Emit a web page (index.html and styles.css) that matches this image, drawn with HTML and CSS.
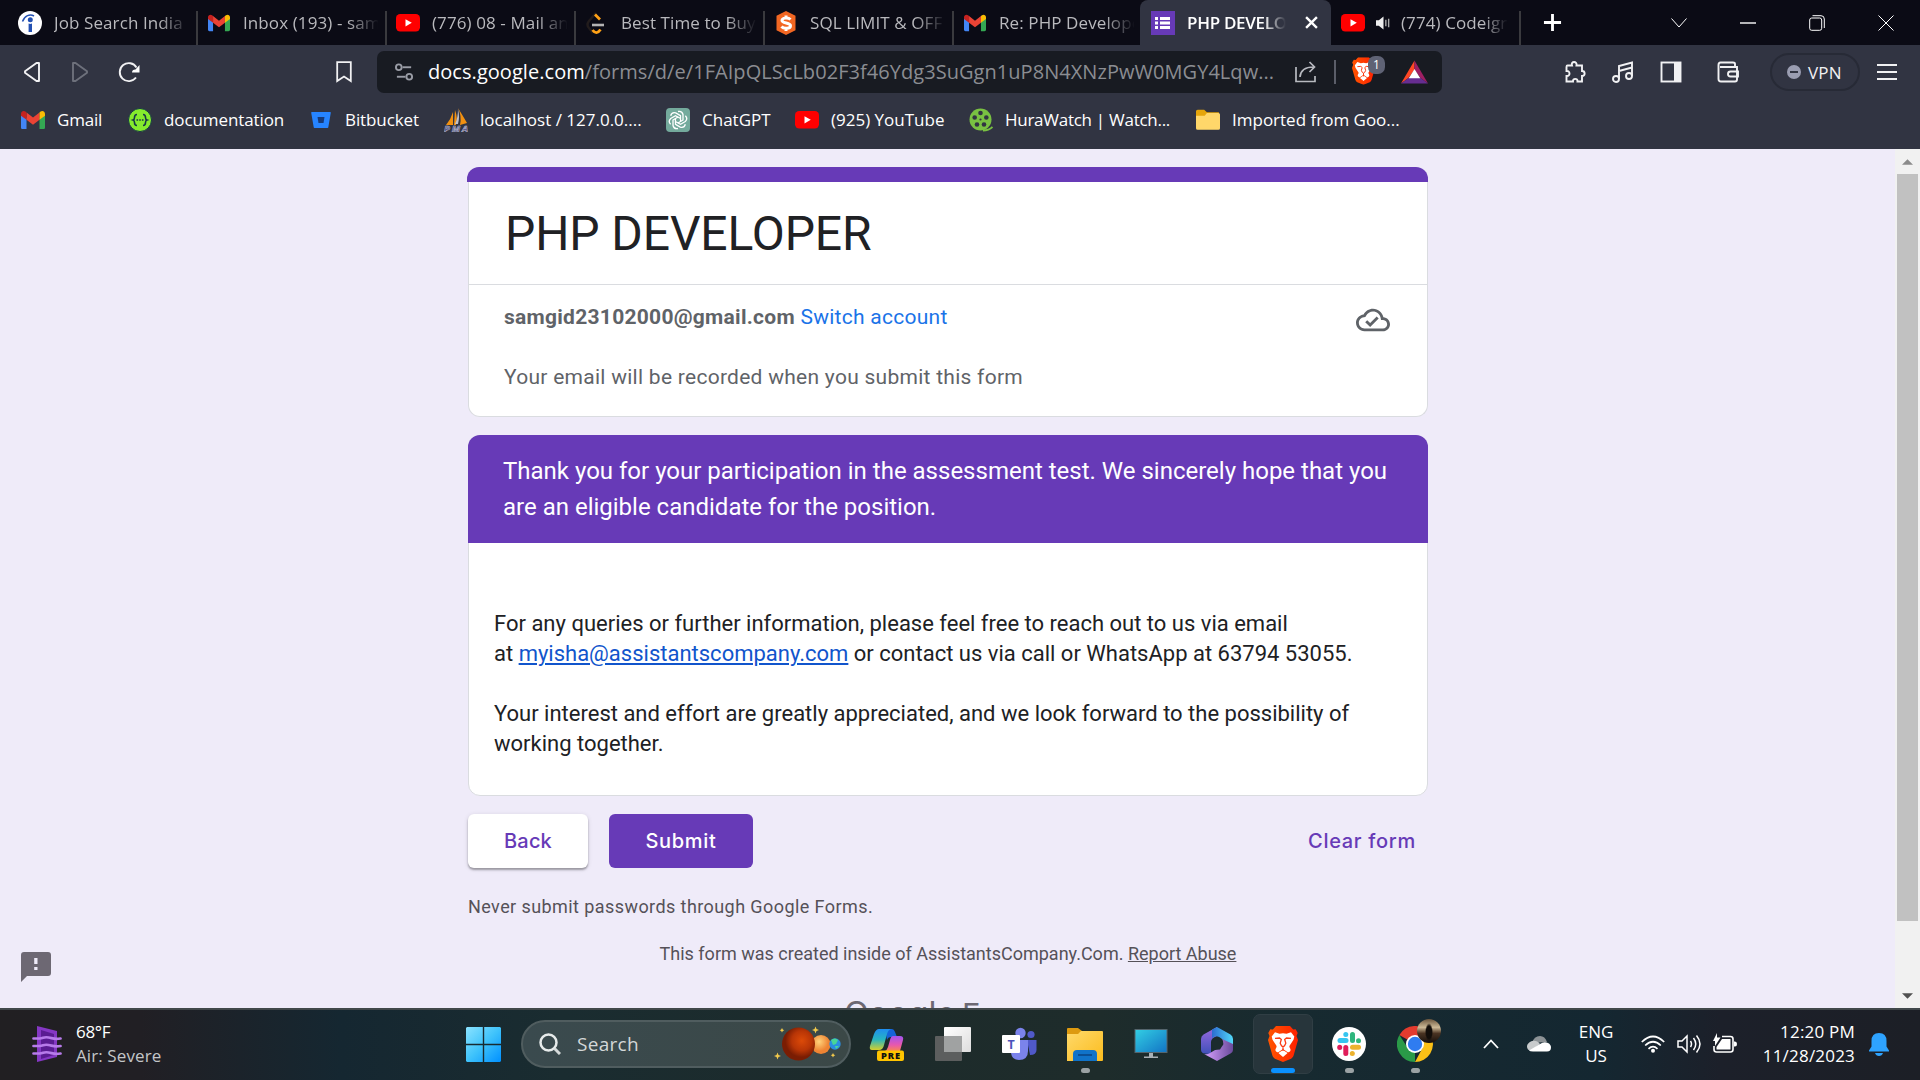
FILE: index.html
```html
<!DOCTYPE html>
<html lang="en">
<head>
<meta charset="utf-8">
<title>PHP DEVELOPER</title>
<link rel="stylesheet" href="styles.css">
</head>
<body>
<svg class="defs" width="0" height="0" aria-hidden="true">
  <defs>
    <symbol id="gmail" viewBox="0 0 24 18">
      <path fill="#4285f4" d="M0 3v13.4C0 17.3.7 18 1.600 18H5.500V7z"/>
      <path fill="#34a853" d="M24 3v13.400c0 .9-.7 1.600-1.600 1.600H18.500V7z"/>
      <path fill="#ea4335" d="M5.500 1.400 12 6.500l6.500-5.100V8.700L12 13.700 5.500 8.700z"/>
      <path fill="#c5221f" d="M0 3v1.700l5.500 4V1.400L4.400.6C2.500-.8 0 .5 0 3z"/>
      <path fill="#fbbc04" d="M24 3v1.700l-5.500 4V1.400l1.100-.8C21.500-.8 24 .5 24 3z"/>
    </symbol>
    <symbol id="youtube" viewBox="0 0 24 18">
      <rect width="24" height="17.500" rx="4.200" fill="#f00"/>
      <path fill="#fff" d="M9.500 5.200v7.200l6.300-3.600z"/>
    </symbol>
    <symbol id="brave" viewBox="0 0 30 36">
      <path fill="url(#bravefill)" d="M8 0h14l3.200 3.500 2.500-.2L29.700 7l-1.200 3L30 14l-4.400 15.500c-.5 1.500-1.300 2.400-2.500 3.200L15 36l-8.100-3.300c-1.200-.8-2-1.700-2.500-3.200L0 14l1.500-4L.3 7l2-3.700 2.500.2z"/>
      <path fill="#fff" d="M15 7.200l3.500.6 4.500-1.500 3.300 4.300-.8 3.200-3.800 5.700c-.5.900-.3 1.500.1 2.200.4.900 1.200 2 .5 3.200-.7 1.100-1.800 1.600-2.600 1.400L15 22.900l-4.700 3.400c-.8.2-1.900-.3-2.600-1.400-.7-1.200.1-2.300.5-3.200.4-.7.6-1.300.1-2.200L4.500 13.800l-.8-3.200L7 6.300l4.500 1.500z"/>
      <path fill="#fff" d="M15 24l4.200 2.700c.3.300.2.600-.1.900L15 31l-4.100-3.400c-.3-.3-.4-.6-.1-.9z"/>
      <path fill="none" stroke="#fb3b14" stroke-width="1.300" d="M7 12.300l4.500-.3 1.800 1.500-1.100 3.700 1.300 2.700 1.500 1 1.500-1 1.300-2.700-1.100-3.700 1.800-1.500 4.500.3M15 20.500V25"/>
    </symbol>
    <linearGradient id="bravefill"><stop offset="0" stop-color="#ff5500"/><stop offset="1" stop-color="#ff2000"/></linearGradient>
  </defs>
</svg>

<header class="browser">
  <div class="tabstrip">
    <div class="tab first"><svg class="fav" viewBox="0 0 24 24"><circle cx="12" cy="12" r="12" fill="#fff"/><circle cx="12.300" cy="8.800" r="2.500" fill="#2451b2"/><path fill="#2451b2" d="M10.600 12.500q1.700.8 3.400 0V21h-3.400z"/><path fill="none" stroke="#2451b2" stroke-width="1.500" d="M4.500 10.500C6.500 4.500 12 2.500 16 5"/></svg><span class="tab-title">Job Search India</span></div>
    <div class="tab"><svg class="fav short"><use href="#gmail"/></svg><span class="tab-title">Inbox (193) - sam</span></div>
    <div class="tab"><svg class="fav yt"><use href="#youtube"/></svg><span class="tab-title">(776) 08 - Mail an</span></div>
    <div class="tab"><svg class="fav" viewBox="0 0 24 24"><path fill="none" stroke="#221c1c" stroke-width="2.400" d="M11 2 4 10q-3 4 0 7l4 5"/><path fill="none" stroke="#ffa116" stroke-width="2.800" d="M10 3.500l5 5M7.500 19q4 5.500 8-.5"/><path stroke="#b3b3b3" stroke-width="2.600" d="M7 14h12"/></svg><span class="tab-title">Best Time to Buy</span></div>
    <div class="tab"><svg class="fav" viewBox="0 0 24 24"><path fill="#f26722" d="M12 0l9.500 4.800v14.400L12 24l-9.500-4.800V4.800z"/><path fill="none" stroke="#fff" stroke-width="3" d="M16.500 8.500C14.500 6.500 8 6.500 8 9.500s8.500 2 8.500 5.200-7 3.300-9 .8M12 4.500v3M12 17v3"/></svg><span class="tab-title">SQL LIMIT &amp; OFF</span></div>
    <div class="tab narrow"><svg class="fav short"><use href="#gmail"/></svg><span class="tab-title">Re: PHP Develope</span></div>
    <div class="tab active"><svg class="fav" viewBox="0 0 24 24"><rect width="24" height="24" fill="#673ab7"/><path fill="#fff" d="M4 6h3v3H4zm5 0h10v3H9zm-5 4.500h3v3H4zm5 0h10v3H9zM4 15h3v3H4zm5 0h10v3H9z"/></svg><span class="tab-title">PHP DEVELO</span><svg class="tab-close" viewBox="0 0 12 12"><path d="M1 1l10 10M11 1 1 11" stroke="#fff" stroke-width="2.200"/></svg></div>
    <div class="tab last"><svg class="fav yt"><use href="#youtube"/></svg><svg class="speaker" viewBox="0 0 16 14"><path fill="#eee" d="M0 4h3l5-4v14l-5-4H0z"/><path d="M10.500 3.500v7M13.500 2.500v9" stroke="#aaa" stroke-width="1.500"/></svg><span class="tab-title">(774) Codeign</span></div>
    <svg class="newtab" viewBox="0 0 20 20"><path d="M10 1v18M1 10h18" stroke="#fff" stroke-width="3"/></svg>
    <div class="winctl">
      <svg viewBox="0 0 16 16"><path d="M.5 3.500 8 12l7.500-8.500"/></svg>
      <svg viewBox="0 0 16 16"><path d="M0 8h16" stroke-width="1.400"/></svg>
      <svg viewBox="0 0 16 16"><rect x=".7" y="3" width="12" height="12.300" rx="2"/><path d="M3.500.7h8.500q3.300 0 3.300 3.300v9"/></svg>
      <svg viewBox="0 0 16 16"><path d="M.5.5l15 15M15.500.5l-15 15"/></svg>
    </div>
  </div>

  <div class="toolbar">
    <div class="nav">
      <svg viewBox="0 0 20 22"><path d="M17 2v18L14.500 20 3 11.700v-1.400L14.500 2z"/></svg>
      <svg class="off" viewBox="0 0 20 22"><path d="M3 2v18l2.500 0L17 11.700v-1.400L5.500 2z"/></svg>
      <svg viewBox="0 0 22 22"><path d="M18.500 6.500A9 9 0 1 0 18 16.500"/><path fill="#fff" stroke="none" d="M21.500 4v7.500h-7.500q0-3 3.500-3z"/></svg>
    </div>
    <svg class="bm" viewBox="0 0 16 22"><path d="M1.200 1.200h13.600V20L8 15.500 1.200 20z"/></svg>
    <div class="urlbar">
      <svg class="tune" viewBox="0 0 20 18"><g fill="none" stroke="#9a9da6" stroke-width="2"><circle cx="4" cy="4" r="3"/><path d="M8 4h9"/><circle cx="15" cy="14" r="3"/><path d="M2 14h9"/></g></svg>
      <span class="url"><b>docs.google.com</b>/forms/d/e/1FAIpQLScLb02F3f46Ydg3SuGgn1uP8N4XNzPwW0MGY4Lqw...</span>
      <svg class="share" viewBox="0 0 22 22"><path fill="none" stroke="#b8bac0" stroke-width="1.700" d="M1 6v14.500h19V15M5 16c.5-6 4-10 13.500-10M14.500 1l5 5-5 5"/></svg>
      <i class="bar"></i>
      <span class="shield"><svg viewBox="0 0 30 36"><use href="#brave"/></svg><em>1</em></span>
      <svg class="bat" viewBox="0 0 28 24"><path fill="#ff4724" d="M14 0v9.500L8 18 0 24z"/><path fill="#9e1f63" d="M14 0v9.500L20 18l8 6z"/><path fill="#662d91" d="M0 24l8-6h12l8 6z"/><path fill="#fff" d="M14 9l6 9.500H8z"/></svg>
    </div>
    <div class="tools">
      <svg viewBox="0 0 22 22"><path d="M3.500 4.500H8C6.500-.2 13.500-.2 12.500 4.500H18V10c3.500 0 3.500 5 0 5v5.500h-4.500c.5-3.500-5-3.500-4.500 0H2.500V15c4 .5 4-5.500 0-5V6q0-1.500 1-1.500z"/></svg>
      <svg viewBox="0 0 22 22"><circle cx="4" cy="18" r="3"/><circle cx="17" cy="15" r="3"/><path d="M7 18V5l13-3.500V15M7 10l13-3.500"/></svg>
      <svg viewBox="0 0 22 22"><rect x="1.500" y="1.500" width="19" height="19"/><path fill="#f1f1f3" stroke="none" d="M14 1h7v20h-7z"/></svg>
      <svg viewBox="0 0 22 22"><path d="M18 6V3q0-1.500-2-1.500H3.500Q1.500 1.500 1.500 4v14q0 2.500 2.500 2.500h14q2 0 2-2V6H3M21 10.500h-7.500q-2.500 0-2.500 2.500t2.500 2.500H21z"/></svg>
    </div>
    <div class="vpn"><i></i><span>VPN</span></div>
    <svg class="menu" viewBox="0 0 20 16"><path d="M0 1h20M0 8h20M0 15h20" stroke="#f1f1f3" stroke-width="1.800"/></svg>
  </div>

  <nav class="bookmarks">
    <a class="b1"><svg viewBox="0 0 24 18"><use href="#gmail"/></svg><span>Gmail</span></a>
    <a class="b2"><svg viewBox="0 0 24 24"><circle cx="12" cy="12" r="11.500" fill="#85ea2d" stroke="#173647"/><path fill="none" stroke="#173647" stroke-width="1.600" d="M9 6.500q-2.500 0-2.500 3 0 2-1.500 2.500 1.500.5 1.500 2.500 0 3 2.500 3M15 6.500q2.500 0 2.500 3 0 2 1.500 2.500-1.500.5-1.500 2.500 0 3-2.500 3"/><path d="M8.500 12h7" stroke="#173647" stroke-width="1.600" stroke-dasharray="1.600 1.100"/></svg><span>documentation</span></a>
    <a class="b3"><svg viewBox="0 0 20 20"><path fill="#2684ff" d="M.8 2h18.400q.7 0 .6.700L17.300 17.300q-.1.700-.8.700h-13q-.7 0-.8-.7L.2 2.700Q.1 2 .8 2z"/><path fill="#173a78" d="M6.500 7h7l-1 6h-5z"/></svg><span>Bitbucket</span></a>
    <a class="b4"><svg viewBox="0 0 24 24"><path fill="#f29111" d="M9 4v13H2Q7 11 9 4zM14 0q5 8 9 15l-7 2q2-9-2-17zM11 2q3 8 1 15h-2z"/><path fill="#bfc1cc" d="M14 1q0 9-3 15h3q2-7 0-15z"/><text x="0" y="24" font-size="9.500" font-weight="700" font-style="italic" fill="#3c3c70" stroke="#c7c7de" stroke-width=".5" textLength="24">PMA</text></svg><span>localhost / 127.0.0....</span></a>
    <a class="b5"><svg viewBox="0 0 24 24"><rect width="24" height="24" rx="4" fill="#74aa9c"/><g fill="none" stroke="#fff" stroke-width="1.300"><path id="kn" d="M12 3.500q4-1 5 3v5.500l-5 3"/><use href="#kn" transform="rotate(60 12 12)"/><use href="#kn" transform="rotate(120 12 12)"/><use href="#kn" transform="rotate(180 12 12)"/><use href="#kn" transform="rotate(240 12 12)"/><use href="#kn" transform="rotate(300 12 12)"/></g></svg><span>ChatGPT</span></a>
    <a class="b6"><svg viewBox="0 0 24 18"><use href="#youtube"/></svg><span>(925) YouTube</span></a>
    <a class="b7"><svg viewBox="0 0 24 24"><circle cx="11.500" cy="11.500" r="11" fill="#79c142"/><g fill="#313442"><circle cx="11.500" cy="5" r="2.300"/><circle cx="17.300" cy="9.500" r="2.300"/><circle cx="15" cy="16.500" r="2.300"/><circle cx="8" cy="16.500" r="2.300"/><circle cx="5.700" cy="9.500" r="2.300"/><circle cx="11.500" cy="11.500" r="1.100"/></g><path d="M14 22.500q6 0 9.500-3.500" fill="none" stroke="#79c142" stroke-width="1.800"/></svg><span>HuraWatch | Watch...</span></a>
    <a class="b8"><svg viewBox="0 0 22 20"><path fill="#e5a50a" d="M0 2q0-1.500 1.500-1.500h6L10 3h11v5H0z"/><path fill="#ffd76a" d="M0 6h8l2-2.500h10.500Q22 3.500 22 5v12.500q0 1.500-1.500 1.500h-19Q0 19 0 17.500z"/></svg><span>Imported from Goo...</span></a>
  </nav>
</header>

<div class="viewport">
  <main class="page">
    <div class="form">
      <section class="card intro">
        <div class="accent"></div>
        <h1>PHP DEVELOPER</h1>
        <div class="account">
          <div class="who">
            <p><b>samgid23102000@gmail.com</b> <a>Switch account</a></p>
            <p>Your email will be recorded when you submit this form</p>
          </div>
          <svg viewBox="0 0 24 24"><path fill="#5f6368" d="M19.350 10.040C18.670 6.590 15.640 4 12 4 9.110 4 6.600 5.640 5.350 8.040 2.340 8.360 0 10.910 0 14c0 3.310 2.690 6 6 6h13c2.760 0 5-2.240 5-5 0-2.640-2.050-4.780-4.650-4.960zM19 18H6c-2.210 0-4-1.790-4-4 0-2.050 1.530-3.760 3.560-3.970l1.070-.11.500-.95C8.080 7.140 9.940 6 12 6c2.620 0 4.880 1.860 5.390 4.430l.3 1.500 1.530.11c1.560.1 2.780 1.410 2.780 2.960 0 1.650-1.350 3-3 3zm-9-3.820-2.090-2.090L6.500 13.500 10 17l6.010-6.010-1.410-1.410z"/></svg>
        </div>
      </section>

      <section class="card">
        <h2>Thank you for your participation in the assessment test. We sincerely hope that you<br>are an eligible candidate for the position.</h2>
        <div class="desc">
          <p>For any queries or further information, please feel free to reach out to us via email<br>at <a>myisha@assistantscompany.com</a> or contact us via call or WhatsApp at 63794 53055.</p>
          <p>Your interest and effort are greatly appreciated, and we look forward to the possibility of<br>working together.</p>
        </div>
      </section>

      <div class="actions">
        <button class="btn back">Back</button>
        <button class="btn submit">Submit</button>
        <a class="clear">Clear form</a>
      </div>
      <p class="warn">Never submit passwords through Google Forms.</p>
      <p class="origin">This form was created inside of AssistantsCompany.Com. <u>Report Abuse</u></p>
      <p class="brand"><span class="g">Google</span><span class="f">Forms</span></p>
    </div>
    <svg class="feedback" viewBox="0 0 30 30"><path fill="#6d6873" d="M3 0h24q3 0 3 3v18q0 3-3 3H6l-6 6V3q0-3 3-3z"/><path fill="#efebf9" d="M13.200 6h3.300v6h-3.300zm0 9h3.300v3h-3.300z"/></svg>
  </main>
  <div class="scroll">
    <svg viewBox="0 0 12 6"><path fill="#8b8b8b" d="M6 0l6 6H0z"/></svg>
    <i></i>
    <svg viewBox="0 0 12 6"><path fill="#505050" d="M6 6l6-6H0z"/></svg>
  </div>
</div>

<footer class="taskbar">
  <div class="weather">
    <svg viewBox="0 0 30 36"><path fill="#8537c4" d="M5 0l20 5v26L5 36z"/><path fill="#5a1c92" d="M9 4l13 4v21L9 33z"/><path fill="none" stroke="#b77bea" stroke-width="2.700" stroke-linecap="round" d="M1.500 12.500h6c4 0 4-2 9-1s6 2 12 1M1.500 20h6c4 0 4-2 9-1s6 2 12 1M1.500 27.500h6c4 0 4-2 9-1s6 2 12 1"/></svg>
    <div><p class="temp">68°F</p><p class="dim">Air: Severe</p></div>
  </div>
  <svg class="start" viewBox="0 0 35 35"><defs><linearGradient id="win" x1="0" y1="0" x2="35" y2="35" gradientUnits="userSpaceOnUse"><stop offset="0" stop-color="#8be3ff"/><stop offset=".5" stop-color="#3fc3fb"/><stop offset="1" stop-color="#0090ff"/></linearGradient></defs><path fill="url(#win)" d="M1 0h15.800v16.800H0V1zM18.200 0H34l1 1v15.800H18.200zM0 18.200h16.800V35H1l-1-1zM18.200 18.200H35V34l-1 1H18.200z"/></svg>
  <div class="search">
    <svg class="mag" viewBox="0 0 22 22"><circle cx="9.500" cy="9.500" r="8" fill="none" stroke="#e7ebeb" stroke-width="2.500"/><path d="M15.500 15.500 21 21" stroke="#d5dada" stroke-width="3"/></svg>
    <span>Search</span>
    <svg class="planets" viewBox="0 0 68 36"><defs><radialGradient id="mars" cx=".6" cy=".4"><stop offset="0" stop-color="#dc4a08"/><stop offset=".6" stop-color="#b83506"/><stop offset="1" stop-color="#7a1d03"/></radialGradient><radialGradient id="venus" cx=".4" cy=".35"><stop offset="0" stop-color="#ffd27a"/><stop offset="1" stop-color="#ee8433"/></radialGradient></defs><circle cx="48" cy="18.500" r="9.500" fill="url(#venus)"/><circle cx="62" cy="18" r="5.700" fill="#2a8ee0"/><path fill="#48d597" d="M58 14q4-3 7 0l-2 4-3 1zM62 20h4l-3 3z"/><circle cx="25.500" cy="18" r="16.500" fill="url(#mars)"/><path fill="#f2c94c" d="M42.500.5l1 2.500 2.500 1-2.500 1-1 2.500-1-2.500-2.500-1 2.500-1zM4.500 26.500l1 2.500 2.500 1-2.500 1-1 2.500-1-2.500L1 30l2.500-1zM9 2l.8 1.500 1.500.8-1.500.8L9 6.500l-.8-1.400-1.500-.8 1.500-.8zM60 27l.8 1.500 1.500.8-1.500.8-.8 1.500-.8-1.500-1.500-.8 1.500-.8z"/></svg>
  </div>
  <div class="apps">
    <div class="app"><svg viewBox="0 0 36 36"><defs><linearGradient id="cp1" x1="0" y1="0" x2="0" y2="1"><stop offset="0" stop-color="#1f8df0"/><stop offset=".5" stop-color="#27b5c0"/><stop offset="1" stop-color="#d6cf2b"/></linearGradient><linearGradient id="cp2" x1="0" y1="0" x2="0" y2="1"><stop offset="0" stop-color="#a254f0"/><stop offset=".6" stop-color="#e858ae"/><stop offset="1" stop-color="#f98551"/></linearGradient></defs><path fill="#1563d8" d="M16 3h7q2 0 3 3l2 5h-6q-3 0-4 3z"/><path fill="url(#cp1)" d="M10 3h12q-3 1-4 5l-3 11q-1 5-5 5H3q-3 0-2-4L5 8q2-5 5-5z"/><path fill="url(#cp2)" d="M24 10h7q4 0 3 4l-3 11H16q2-1 3-4l2-7q1-4 3-4z"/><rect x="8" y="24.500" width="27" height="10.500" rx="2" fill="#ffc400"/><text x="21.500" y="33" font-size="9.300" font-weight="800" fill="#111" text-anchor="middle" textLength="19">PRE</text></svg></div>
    <div class="app"><svg viewBox="0 0 36 36"><defs><linearGradient id="tv" x1="0" y1="0" x2="1" y2="1"><stop offset="0" stop-color="#fff"/><stop offset="1" stop-color="#ddd"/></linearGradient></defs><rect x="9" y="1" width="27" height="25" rx="1" fill="url(#tv)"/><rect y="10" width="27" height="25" rx="1" fill="#5c5e5e"/><path fill="#a0a2a2" d="M9 10h18v16H9z"/></svg></div>
    <div class="app"><svg viewBox="0 0 36 36"><circle cx="30" cy="8.500" r="3.600" fill="#5059c9"/><path fill="#5059c9" d="M26 14h9.500v10q0 5-6.500 5z"/><circle cx="19.500" cy="7" r="5.200" fill="#7b83eb"/><path fill="#7b83eb" d="M12 14h15v11q0 9-9 9-7 0-8-7z"/><rect x="1" y="9" width="18" height="18" rx="1" fill="#fff"/><text x="10" y="22.500" font-size="12.500" font-weight="700" fill="#4b53bc" text-anchor="middle">T</text></svg></div>
    <div class="app run"><svg viewBox="0 0 36 36"><defs><linearGradient id="fo" x1="0" y1="0" x2="1" y2="1"><stop offset="0" stop-color="#ffd96b"/><stop offset="1" stop-color="#fbbc1d"/></linearGradient></defs><path fill="#dd9a10" d="M0 3q0-1 1-1h10l4 3-4 5H0z"/><path fill="url(#fo)" d="M0 8h11l3-3h21q1 0 1 1v28q0 1-1 1H0z"/><path fill="#1073c9" d="M6 35V28q0-4 4-4h16q4 0 4 4v7z"/><path d="M11 29h14" stroke="#0b4f94" stroke-width="2"/></svg></div>
    <div class="app"><svg viewBox="0 0 36 36"><defs><linearGradient id="mo" x1="0" y1="0" x2="1" y2="1"><stop offset="0" stop-color="#32cfe4"/><stop offset="1" stop-color="#1273c4"/></linearGradient></defs><rect x="2" y="3.500" width="32" height="23" fill="url(#mo)" stroke="#55656d"/><path fill="#a9b0b5" d="M16 27h4v3.500h5V32H11v-1.500h5z"/></svg></div>
    <div class="app"><svg viewBox="0 0 36 36"><defs><linearGradient id="ma" x1="0" y1="0" x2="0" y2="1"><stop offset="0" stop-color="#9a6ae0"/><stop offset="1" stop-color="#3e50b8"/></linearGradient><linearGradient id="mb"><stop offset="0" stop-color="#2a6cd0"/><stop offset="1" stop-color="#52d8fa"/></linearGradient><linearGradient id="mc"><stop offset="0" stop-color="#d9a2ff"/><stop offset="1" stop-color="#6a4a9c"/></linearGradient></defs><path fill="url(#ma)" d="M18 1 4.500 8.500Q2 10 2 13v11q0 2 2 3.300l8 1V16q0-4 6-6z"/><path fill="url(#mb)" d="M13 3.500 18 1l13.500 7.500Q34 10 34 13v8L23 13q-5-5-10-1z"/><path fill="url(#mc)" d="M34 18v6q0 2-2.500 3.500L18 35 5 28q3 1 6-1l11-6.500q4-3 1-7.500z"/><path fill="#1b2b2d" d="M15 12.500h6l3.500 5.500-3.500 5.500-6 .5-2.500-6z"/></svg></div>
    <div class="app run current"><svg viewBox="0 0 30 36" class="bv"><use href="#brave"/></svg></div>
    <div class="app run"><svg viewBox="0 0 36 36"><circle cx="18" cy="18" r="17" fill="#fff"/><g stroke-width="5" stroke-linecap="round"><path d="M9 14.500h6" stroke="#36c5f0"/><path d="M14.800 8.500v.1" stroke="#36c5f0"/><path d="M21.500 8.500v6" stroke="#2eb67d"/><path d="M27.500 14.700v.1" stroke="#2eb67d"/><path d="M21.500 21.300h6" stroke="#ecb22e"/><path d="M21.300 27.500v.1" stroke="#ecb22e"/><path d="M14.800 21.500v6" stroke="#e01e5a"/><path d="M8.700 21.300v.1" stroke="#e01e5a"/></g></svg></div>
    <div class="app run"><svg viewBox="0 0 36 36"><path fill="#e33b2e" d="M18 18 2.400 9A18 18 0 0 1 33.600 9z"/><path fill="#2a9a48" d="M18 18v18A18 18 0 0 1 2.400 9l8.400 13z"/><path fill="#fbc116" d="M18 10h16.100A18 18 0 0 1 18 36l7.500-14z"/><circle cx="18" cy="18" r="9" fill="#fff"/><circle cx="18" cy="18" r="7.200" fill="#2f7cf0"/></svg><i class="avatar"></i></div>
  </div>
  <div class="tray">
    <svg class="chev" viewBox="0 0 16 10"><path d="M1 9l7-7.500L15 9" fill="none" stroke="#fff" stroke-width="1.800"/></svg>
    <svg class="cloud" viewBox="0 0 24 16"><path fill="#8d9396" d="M5 7q2-7 8-7 5 0 7 6z"/><path fill="#c8cbcc" d="M5 5q5-1 8 3l-9 7Q0 14 0 10.500T5 5z"/><path fill="#fff" d="M2 14.500 13 8q4-3 8-1 3 1.500 3 4.500 0 4-4 4H6q-3 0-4-1z"/></svg>
    <div class="lang"><p>ENG</p><p>US</p></div>
    <svg class="wifi" viewBox="0 0 24 18"><g fill="none" stroke="#fff" stroke-width="1.700"><path d="M.8 7q11.200-11 22.400 0M4.200 10.500q7.800-7.500 15.600 0M7.500 13.800q4.500-4.300 9 0"/></g><circle cx="12" cy="15.700" r="2" fill="#fff"/></svg>
    <svg class="vol" viewBox="0 0 24 20"><g fill="none" stroke="#fff" stroke-width="1.500"><path d="M1 7h4l5-5v16l-5-5H1z"/><path d="M13.500 7q2 3 0 6M16.500 4q4.500 6 0 12M19.500 1.500q7 8.500 0 17"/></g></svg>
    <svg class="batt" viewBox="0 0 24 20"><path fill="none" stroke="#fff" stroke-width="1.600" d="M9 3.500h8.500q2.500 0 2.500 2.500v10.500q0 2.500-2.500 2.500H3.500Q1 19 1 16.500V13"/><path fill="#fff" d="M9 6h8.500v10.500h-14V14zM21 8.500h1q2 0 2 2.500t-2 2.500h-1zM4 0v4.500h3.500L2 13V8H0z"/></svg>
    <div class="clock"><p>12:20 PM</p><p>11/28/2023</p></div>
    <svg class="bell" viewBox="0 0 20 23"><path fill="#2ea3ff" d="M10 0q7.500 0 7.500 8v5.500L20 17.500v1H0v-1l2.500-4V8Q2.500 0 10 0zM6 20h8q-1 3-4 3t-4-3z"/></svg>
  </div>
</footer>
</body>
</html>
```
FILE: styles.css
```css
* { box-sizing: border-box; }
body { margin: 0; width: 1920px; height: 1080px; overflow: hidden; display: flex; flex-direction: column; background: #efebf9; font-family: "Open Sans", "Noto Sans", sans-serif; }
p, h1, h2 { margin: 0; font-weight: 400; }
svg { display: block; flex: none; }
.defs { position: absolute; }

/* Browser chrome */
.browser { height: 149px; flex: none; background: #313442; }
.tabstrip { height: 45px; background: #0b0b15; display: flex; align-items: center; padding-left: 7px; }
.tab { width: 189px; height: 45px; flex: none; display: flex; align-items: center; padding-left: 11px; background: linear-gradient(#3a3a3e, #3a3a3e) left bottom / 2px 34px no-repeat; }
.tab.first { background: none; }
.tab.narrow { width: 188px; }
.tab.active { width: 191px; background: #313442; border-radius: 8px 8px 0 0; }
.tab.last { width: 190px; padding-left: 10px; background-position: right bottom; }
.fav { width: 24px; height: 24px; margin-right: 12px; }
.fav.short { width: 22px; height: 20px; margin: 0 13px 0 1px; }
.fav.yt { height: 18px; margin-top: 1px; }
.tab-title { width: 140px; white-space: nowrap; font-size: 17px; line-height: 24px; letter-spacing: .1px; color: #b9b9bd; -webkit-mask-image: linear-gradient(90deg, #000 75%, transparent 97%); mask-image: linear-gradient(90deg, #000 75%, transparent 97%); }
.active .tab-title { width: 102px; color: #fff; font-weight: 600; letter-spacing: -.3px; }
.tab-close { width: 13px; height: 13px; margin-left: 16px; }
.speaker { width: 15px; height: 14px; margin: 0 10px 0 -1px; }
.last .tab-title { width: 110px; }
.newtab { width: 19px; height: 19px; margin-left: 22px; }
.winctl { display: flex; gap: 53px; margin-left: 109px; }
.winctl svg { width: 16px; height: 16px; fill: none; stroke: #fff; stroke-width: 1; }

.toolbar { height: 54px; display: flex; align-items: center; padding-left: 22px; }
.nav { display: flex; gap: 28px; width: 314px; }
.nav svg { width: 20px; height: 22px; fill: none; stroke: #f1f1f3; stroke-width: 1.9; stroke-linejoin: round; }
.nav svg.off { stroke: #6d707b; }
.nav svg:last-child { width: 22px; }
.bm { width: 16px; height: 22px; fill: none; stroke: #f1f1f3; stroke-width: 1.8; }
.urlbar { width: 1065px; height: 42px; margin-left: 25px; display: flex; align-items: center; padding-left: 18px; background: #181b22; border-radius: 7px; }
.tune { width: 19px; height: 18px; }
.url { width: 867px; margin-left: 14px; white-space: nowrap; font-size: 20px; line-height: 28px; letter-spacing: .05px; color: #8b8d92; }
.url b { font-weight: 400; color: #fff; }
.share { width: 22px; height: 22px; }
.bar { width: 2px; height: 24px; margin-left: 17px; background: #5b5e69; }
.shield { position: relative; width: 33px; height: 28px; margin-left: 16px; }
.shield svg { width: 23px; height: 28px; margin-top: -1px; }
.shield em { position: absolute; left: 16px; top: -2px; width: 17px; height: 18px; border-radius: 7px; background: #5f6375; color: #fff; font: 12px/18px "Open Sans", sans-serif; text-align: center; }
.bat { width: 27px; height: 24px; margin-left: 16px; }
.tools { display: flex; margin-left: 122px; }
.tools svg { width: 22px; height: 22px; margin-right: 26px; fill: none; stroke: #f1f1f3; stroke-width: 1.9; }
.tools svg:nth-child(3) { margin-right: 35px; }
.vpn { width: 90px; height: 38px; margin-left: 5px; border: 2px solid #272a36; border-radius: 19px; display: flex; align-items: center; padding-left: 15px; gap: 7px; font-size: 17px; letter-spacing: .2px; color: #f1f1f3; }
.vpn i { width: 14px; height: 14px; border-radius: 50%; background: linear-gradient(#313442, #313442) center / 8px 2px no-repeat, #9a9db1; }
.menu { width: 20px; height: 16px; margin-left: 17px; }

.bookmarks { display: flex; align-items: center; height: 42px; padding-left: 21px; color: #fff; font-size: 17px; line-height: 24px; white-space: nowrap; }
.bookmarks a { display: flex; align-items: center; gap: 12px; }
.bookmarks svg { width: 24px; height: 24px; }
.bookmarks .b3 svg { width: 20px; height: 20px; margin: 0 2px; }
.b1 { width: 107px; letter-spacing: -.2px; }
.b2 { width: 181px; letter-spacing: -.1px; }
.b3 { width: 135px; letter-spacing: -.1px; }
.b4 { width: 222px; }
.b5 { width: 129px; }
.b6 { width: 174px; }
.b7 { width: 227px; letter-spacing: -.27px; }

/* Form page */
.viewport { flex: 1; min-height: 0; display: flex; background: #efebf9; }
.page { position: relative; flex: 1; height: 859px; overflow: hidden; font-family: Roboto, sans-serif; }
.form { width: 960px; margin: 18px 0 0 468px; }
.card { background: #fff; border: 1px solid #dadce0; border-radius: 12px; }
.accent { height: 15px; margin: 0 -1px 0 -2px; background: #673ab7; border-radius: 12px 12px 0 0; }
.intro { height: 250px; border-top: 0; margin-bottom: 18px; }
h1 { height: 103px; padding: 20px 36px 0; font-size: 48px; line-height: 64px; letter-spacing: -.1px; color: #202124; border-bottom: 1px solid #dadce0; }
.account { display: flex; justify-content: space-between; padding: 17px 37px 0 35px; font-size: 21px; line-height: 30px; letter-spacing: .27px; color: #5f6368; }
.account p + p { margin-top: 30px; }
.account b { font-weight: 700; }
.account a { color: #1a73e8; }
.account svg { width: 34px; height: 34px; margin-top: 1px; }
h2 { height: 108px; margin: -1px -1px 0; padding: 18px 35px; background: #673ab7; border-radius: 12px 12px 0 0; color: #fff; font-size: 24px; line-height: 36px; white-space: nowrap; }
.desc { height: 252px; padding: 66px 25px 0; font-size: 22px; line-height: 30px; color: #202124; white-space: nowrap; }
.desc p + p { margin-top: 30px; }
.desc a { color: #1155cc; text-decoration: underline; }
.actions { display: flex; align-items: center; margin-top: 18px; height: 54px; font-family: Inter, sans-serif; }
.btn { height: 54px; border: 0; border-radius: 6px; font: 500 20px Inter, sans-serif; padding: 0; }
.back { width: 120px; margin-right: 21px; background: #fff; color: #673ab7; letter-spacing: .2px; box-shadow: 0 2px 2px rgba(0,0,0,.3), 0 1px 5px rgba(0,0,0,.12); }
.submit { width: 144px; background: #673ab7; color: #fff; letter-spacing: .7px; }
.clear { margin-left: auto; margin-right: 12px; font-size: 20px; font-weight: 500; letter-spacing: .7px; color: #673ab7; }
.warn { margin-top: 25px; font-size: 18px; line-height: 27px; color: #555158; letter-spacing: .42px; }
.origin { margin-top: 20px; font-size: 18px; line-height: 27px; color: #555158; text-align: center; }
.brand { margin-top: 26px; height: 50px; padding-left: 376px; display: flex; align-items: flex-start; color: #6d6873; font-family: Inter, sans-serif; }
.brand .g { width: 118px; font-size: 33px; line-height: 40px; }
.brand .f { font-size: 31px; line-height: 44px; }
.feedback { position: absolute; left: 21px; top: 803px; width: 30px; height: 30px; }
.scroll { width: 25px; padding: 10px 2px 9px; background: #f1f1f1; display: flex; flex-direction: column; align-items: center; }
.scroll svg { width: 11px; height: 6px; }
.scroll i { width: 21px; height: 747px; margin: 9px 0 auto; background: #c1c1c1; }

/* Taskbar */
.taskbar { height: 72px; flex: none; display: flex; align-items: center; padding: 0 0 2px 32px; border-top: 2px solid #41484b; color: #fff; font-size: 17px; line-height: 24px; background: linear-gradient(90deg, #211f22 0, #211f24 140px, #152731 340px, #1a2c30 560px, #1d2b2b 860px, #1e2c2b 1100px, #172a30 1300px, #142731 1600px, #1c202a 1720px, #1c1f26 1920px); }
.weather { display: flex; align-items: center; gap: 14px; width: 434px; }
.weather svg { width: 30px; height: 36px; }
.temp { letter-spacing: -.3px; }
.dim { color: #c4c6c8; letter-spacing: .1px; }
.start { width: 35px; height: 35px; }
.search { width: 330px; height: 48px; margin-left: 20px; display: flex; align-items: center; border: 2px solid #505d5f; border-radius: 24px; background: linear-gradient(90deg, #3a4a4e, #3b4847); padding-left: 16px; font-size: 19px; letter-spacing: .3px; color: #d3d8d8; }
.mag { width: 22px; height: 22px; margin-right: 16px; }
.planets { width: 68px; height: 36px; margin-left: auto; margin-right: 8px; }
.apps { display: flex; margin-left: 3px; }
.app { position: relative; width: 66px; height: 60px; display: flex; align-items: center; justify-content: center; }
.app svg { width: 36px; height: 36px; }
.app .bv { width: 30px; }
.run::after { content: ""; position: absolute; left: 29px; bottom: 1px; width: 9px; height: 5px; border-radius: 3px; background: #9ba2a4; }
.current { width: 60px; margin: 0 3px; background: #27353b; border: 1px solid #303e44; border-radius: 7px; }
.current::after { left: 17px; bottom: 0; width: 24px; background: #0a91ff; }
.avatar { position: absolute; left: 35px; top: 5px; width: 24px; height: 24px; border-radius: 50%; background: radial-gradient(ellipse 4px 9px at 50% 55%, #120d0a 70%, transparent), linear-gradient(#6b563e, #cdb996 35%, #4a3322 60%, #17100c); }
.tray { display: flex; align-items: center; margin-left: 35px; text-align: center; white-space: nowrap; }
.chev { width: 16px; height: 10px; }
.cloud { width: 24px; height: 16px; margin-left: 28px; }
.lang { width: 50px; margin-left: 20px; }
.wifi { width: 24px; height: 18px; margin-left: 20px; }
.vol { width: 24px; height: 20px; margin-left: 12px; }
.batt { width: 24px; height: 20px; margin: -3px 0 0 12px; }
.clock { width: 118px; text-align: right; letter-spacing: .2px; }
.bell { width: 20px; height: 23px; margin-left: 14px; }
```
